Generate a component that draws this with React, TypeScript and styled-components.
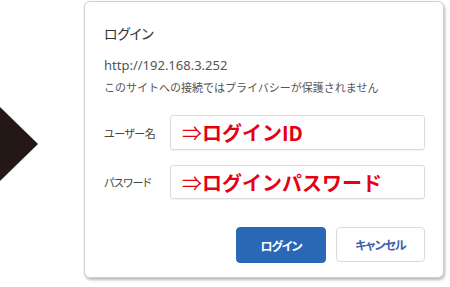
import React from 'react';
import styled, { createGlobalStyle } from 'styled-components';

const GlobalStyle = createGlobalStyle`
  html, body {
    margin: 0;
    padding: 0;
    background: #ffffff;
  }
  body {
    font-family: "Noto Sans CJK JP", "Noto Sans", sans-serif;
  }
`;

const Page = styled.div`
  display: flex;
  align-items: flex-start;
  height: 287px;
  width: 450px;
  overflow: hidden;
`;

const Arrow = styled.svg`
  align-self: center;
  flex: none;
  margin-right: 46px;
`;

const Dialog = styled.div`
  width: 360px;
  box-sizing: border-box;
  margin-top: 1px;
  padding: 21px 18px 14px 19px;
  border: 1px solid #cfcfcf;
  border-radius: 6px;
  box-shadow: 1px 2px 3px rgba(0, 0, 0, 0.28);
  background: #fff;
`;

const Title = styled.div`
  font-size: 14px;
  line-height: 20px;
  color: #333;
  letter-spacing: -0.5px;
  font-feature-settings: "palt";
`;

const Info = styled.div`
  margin-top: 11px;
  font-size: 11px;
  line-height: 22px;
  color: #555;
`;

const Url = styled.div`
  font-family: "Noto Sans", "Liberation Sans", sans-serif;
  font-size: 13px;
`;

const Form = styled.div`
  margin-top: 17px;
  display: flex;
  flex-direction: column;
  gap: 15px;
`;

const Row = styled.div`
  display: flex;
  align-items: center;
`;

const Label = styled.div`
  width: 66px;
  flex: none;
  font-size: 11px;
  letter-spacing: -0.5px;
  color: #444;
  font-feature-settings: "palt";
`;

const Field = styled.div<{ $h: number }>`
  flex: 1;
  height: ${p => p.$h}px;
  box-sizing: border-box;
  border: 1px solid #dcdcdc;
  border-radius: 3px;
  box-shadow: 0 1px 1px rgba(0, 0, 0, 0.06);
  display: flex;
  align-items: center;
  padding-left: 11px;
  font-size: 20px;
  font-weight: 700;
  color: #e50012;
  white-space: nowrap;
`;

const Mark = styled.span`
  font-weight: 400;
`;

const Actions = styled.div`
  margin-top: 28px;
  display: flex;
  justify-content: flex-end;
  gap: 10px;
`;

const Button = styled.div<{ $primary?: boolean }>`
  width: ${p => (p.$primary ? 90 : 89)}px;
  height: ${p => (p.$primary ? 36 : 35)}px;
  box-sizing: border-box;
  border-radius: 4px;
  display: flex;
  align-items: center;
  justify-content: center;
  font-size: 12px;
  font-weight: 700;
  letter-spacing: -1px;
  font-feature-settings: "palt";
  background: ${p => (p.$primary ? '#2a67b5' : '#fff')};
  color: ${p => (p.$primary ? '#fff' : '#3f62a8')};
  border: 1px solid ${p => (p.$primary ? '#2a67b5' : '#dadada')};
`;

export default function App() {
  return (
    <>
      <GlobalStyle />
      <Page>
        <Arrow width="38" height="74" viewBox="0 0 38 74">
          <polygon points="0,0 38,37 0,74" fill="#231815" />
        </Arrow>
        <Dialog>
          <Title>ログイン</Title>
          <Info>
            <Url>http://192.168.3.252</Url>
            <div>このサイトへの接続ではプライバシーが保護されません</div>
          </Info>
          <Form>
            <Row>
              <Label>ユーザー名</Label>
              <Field $h={35}><Mark>⇒</Mark>ログインID</Field>
            </Row>
            <Row>
              <Label>パスワード</Label>
              <Field $h={34}><Mark>⇒</Mark>ログインパスワード</Field>
            </Row>
          </Form>
          <Actions>
            <Button $primary>ログイン</Button>
            <Button>キャンセル</Button>
          </Actions>
        </Dialog>
      </Page>
    </>
  );
}
